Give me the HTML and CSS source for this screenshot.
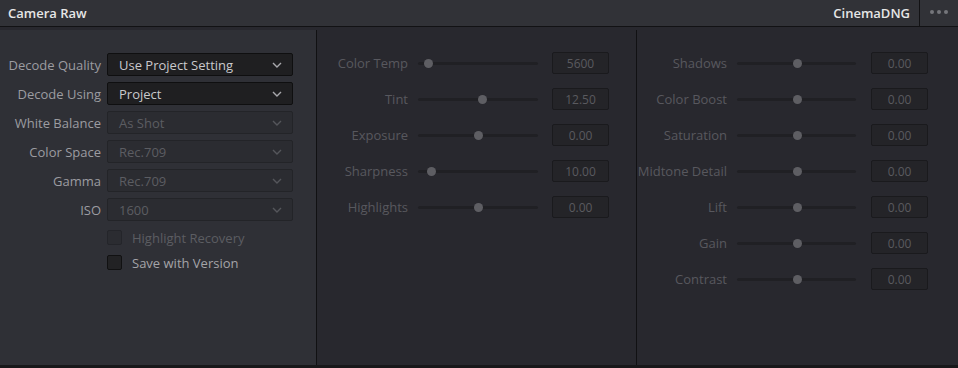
FILE: index.html
```html
<!DOCTYPE html>
<html>
<head>
<meta charset="utf-8">
<link rel="stylesheet" href="styles.css">
</head>
<body>
<div class="app">
  <div class="header">
    <div class="title">Camera Raw</div>
    <div class="fmt">CinemaDNG</div>
    <div class="more"><span></span><span></span><span></span></div>
  </div>
  <div class="body">
    <div class="col left">
      <div class="form">
        <label class="lbl">Decode Quality</label>
        <div class="select on"><span>Use Project Setting</span><svg viewBox="0 0 10 6"><path d="M1 1l4 4 4-4"/></svg></div>
        <label class="lbl">Decode Using</label>
        <div class="select on"><span>Project</span><svg viewBox="0 0 10 6"><path d="M1 1l4 4 4-4"/></svg></div>
        <label class="lbl">White Balance</label>
        <div class="select off"><span>As Shot</span><svg viewBox="0 0 10 6"><path d="M1 1l4 4 4-4"/></svg></div>
        <label class="lbl">Color Space</label>
        <div class="select off"><span>Rec.709</span><svg viewBox="0 0 10 6"><path d="M1 1l4 4 4-4"/></svg></div>
        <label class="lbl">Gamma</label>
        <div class="select off"><span>Rec.709</span><svg viewBox="0 0 10 6"><path d="M1 1l4 4 4-4"/></svg></div>
        <label class="lbl">ISO</label>
        <div class="select off"><span>1600</span><svg viewBox="0 0 10 6"><path d="M1 1l4 4 4-4"/></svg></div>
      </div>
      <div class="checks">
        <div class="check off"><span class="box"></span><span>Highlight Recovery</span></div>
        <div class="check on"><span class="box"></span><span>Save with Version</span></div>
      </div>
    </div>
    <div class="col mid">
      <div class="sliders">
        <div class="slbl">Color Temp</div><div class="track"><span class="knob" style="left:8%"></span></div><div class="val">5600</div>
        <div class="slbl">Tint</div><div class="track"><span class="knob" style="left:53%"></span></div><div class="val">12.50</div>
        <div class="slbl">Exposure</div><div class="track"><span class="knob" style="left:50%"></span></div><div class="val">0.00</div>
        <div class="slbl">Sharpness</div><div class="track"><span class="knob" style="left:11%"></span></div><div class="val">10.00</div>
        <div class="slbl">Highlights</div><div class="track"><span class="knob" style="left:50%"></span></div><div class="val">0.00</div>
      </div>
    </div>
    <div class="col right">
      <div class="sliders r">
        <div class="slbl">Shadows</div><div class="track"><span class="knob" style="left:50%"></span></div><div class="val">0.00</div>
        <div class="slbl">Color Boost</div><div class="track"><span class="knob" style="left:50%"></span></div><div class="val">0.00</div>
        <div class="slbl">Saturation</div><div class="track"><span class="knob" style="left:50%"></span></div><div class="val">0.00</div>
        <div class="slbl">Midtone Detail</div><div class="track"><span class="knob" style="left:50%"></span></div><div class="val">0.00</div>
        <div class="slbl">Lift</div><div class="track"><span class="knob" style="left:50%"></span></div><div class="val">0.00</div>
        <div class="slbl">Gain</div><div class="track"><span class="knob" style="left:50%"></span></div><div class="val">0.00</div>
        <div class="slbl">Contrast</div><div class="track"><span class="knob" style="left:50%"></span></div><div class="val">0.00</div>
      </div>
    </div>
  </div>
</div>
</body>
</html>
```

FILE: styles.css
```css
* { box-sizing: border-box; }
html, body { margin: 0; padding: 0; background: #28282e; }
body { font-family: "Open Sans", "Noto Sans", sans-serif; font-size: 13px; }
.app { width: 958px; height: 368px; display: flex; flex-direction: column; background: #28282e; border-bottom: 3px solid #18181a; }
.header { height: 27px; flex: none; display: flex; align-items: center; background: #313237; border-bottom: 1px solid #121214; }
.title { flex: 1; padding-left: 8px; color: #e6e6e6; font-weight: 600; font-size: 13px; }
.fmt { color: #e6e6e6; font-weight: 600; font-size: 13px; padding-right: 9px; }
.more { width: 39px; height: 26px; border-left: 1px solid #121214; display: flex; align-items: center; justify-content: center; gap: 3px; padding-bottom: 2px; }
.more span { width: 4px; height: 4px; border-radius: 50%; background: #75767b; }
.body { flex: 1; display: flex; padding-top: 3px; }
.col { height: 100%; }
.left { width: 316px; background: #2f3036; padding-top: 23px; }
.mid { width: 320px; border-left: 1px solid #111113; padding-top: 22px; }
.right { flex: 1; border-left: 1px solid #111113; padding-top: 22px; }
.form { display: grid; grid-template-columns: 101px 186px; column-gap: 6px; row-gap: 6px; align-items: center; }
.lbl { text-align: right; color: #9c9ca1; white-space: nowrap; }
.select { height: 23px; border-radius: 2px; display: flex; align-items: center; justify-content: space-between; padding: 0 10px 0 11px; }
.select svg { width: 10px; height: 6px; fill: none; stroke-width: 1.4; }
.select.on { background: #1f1f21; border: 1px solid #0f0f10; color: #c9c9cc; }
.select.on svg { stroke: #a8a8ac; }
.select.off { background: #2b2c31; border: 1px solid #232428; color: #5c5d62; }
.select.off svg { stroke: #55565b; }
.checks { margin-top: 9px; margin-left: 107px; display: flex; flex-direction: column; gap: 10px; }
.check { display: flex; align-items: center; gap: 10px; height: 15px; }
.check .box { width: 15px; height: 15px; border-radius: 2px; }
.check.off { color: #5c5d62; }
.check.off .box { background: #2b2c31; border: 1px solid #24252a; }
.check.on { color: #a4a4a8; }
.check.on .box { background: #222224; border: 1px solid #111112; }
.sliders { display: grid; grid-template-columns: 91px 120px 61px; column-gap: 10px; row-gap: 14px; align-items: center; }
.sliders .val { margin-left: 4px; }
.sliders.r { grid-template-columns: 90px 119px 62px; }
.sliders.r .val { margin-left: 5px; }
.slbl { text-align: right; color: #58585e; white-space: nowrap; }
.track { position: relative; height: 3px; background: #202024; border-radius: 2px; }
.knob { position: absolute; top: -3px; width: 9px; height: 9px; margin-left: -4px; border-radius: 50%; background: #5e5e63; }
.val { height: 22px; background: #242428; border: 1px solid #1a1a1d; border-radius: 2px; color: #5a5a5f; font-size: 12px; display: flex; align-items: center; justify-content: center; }
```
